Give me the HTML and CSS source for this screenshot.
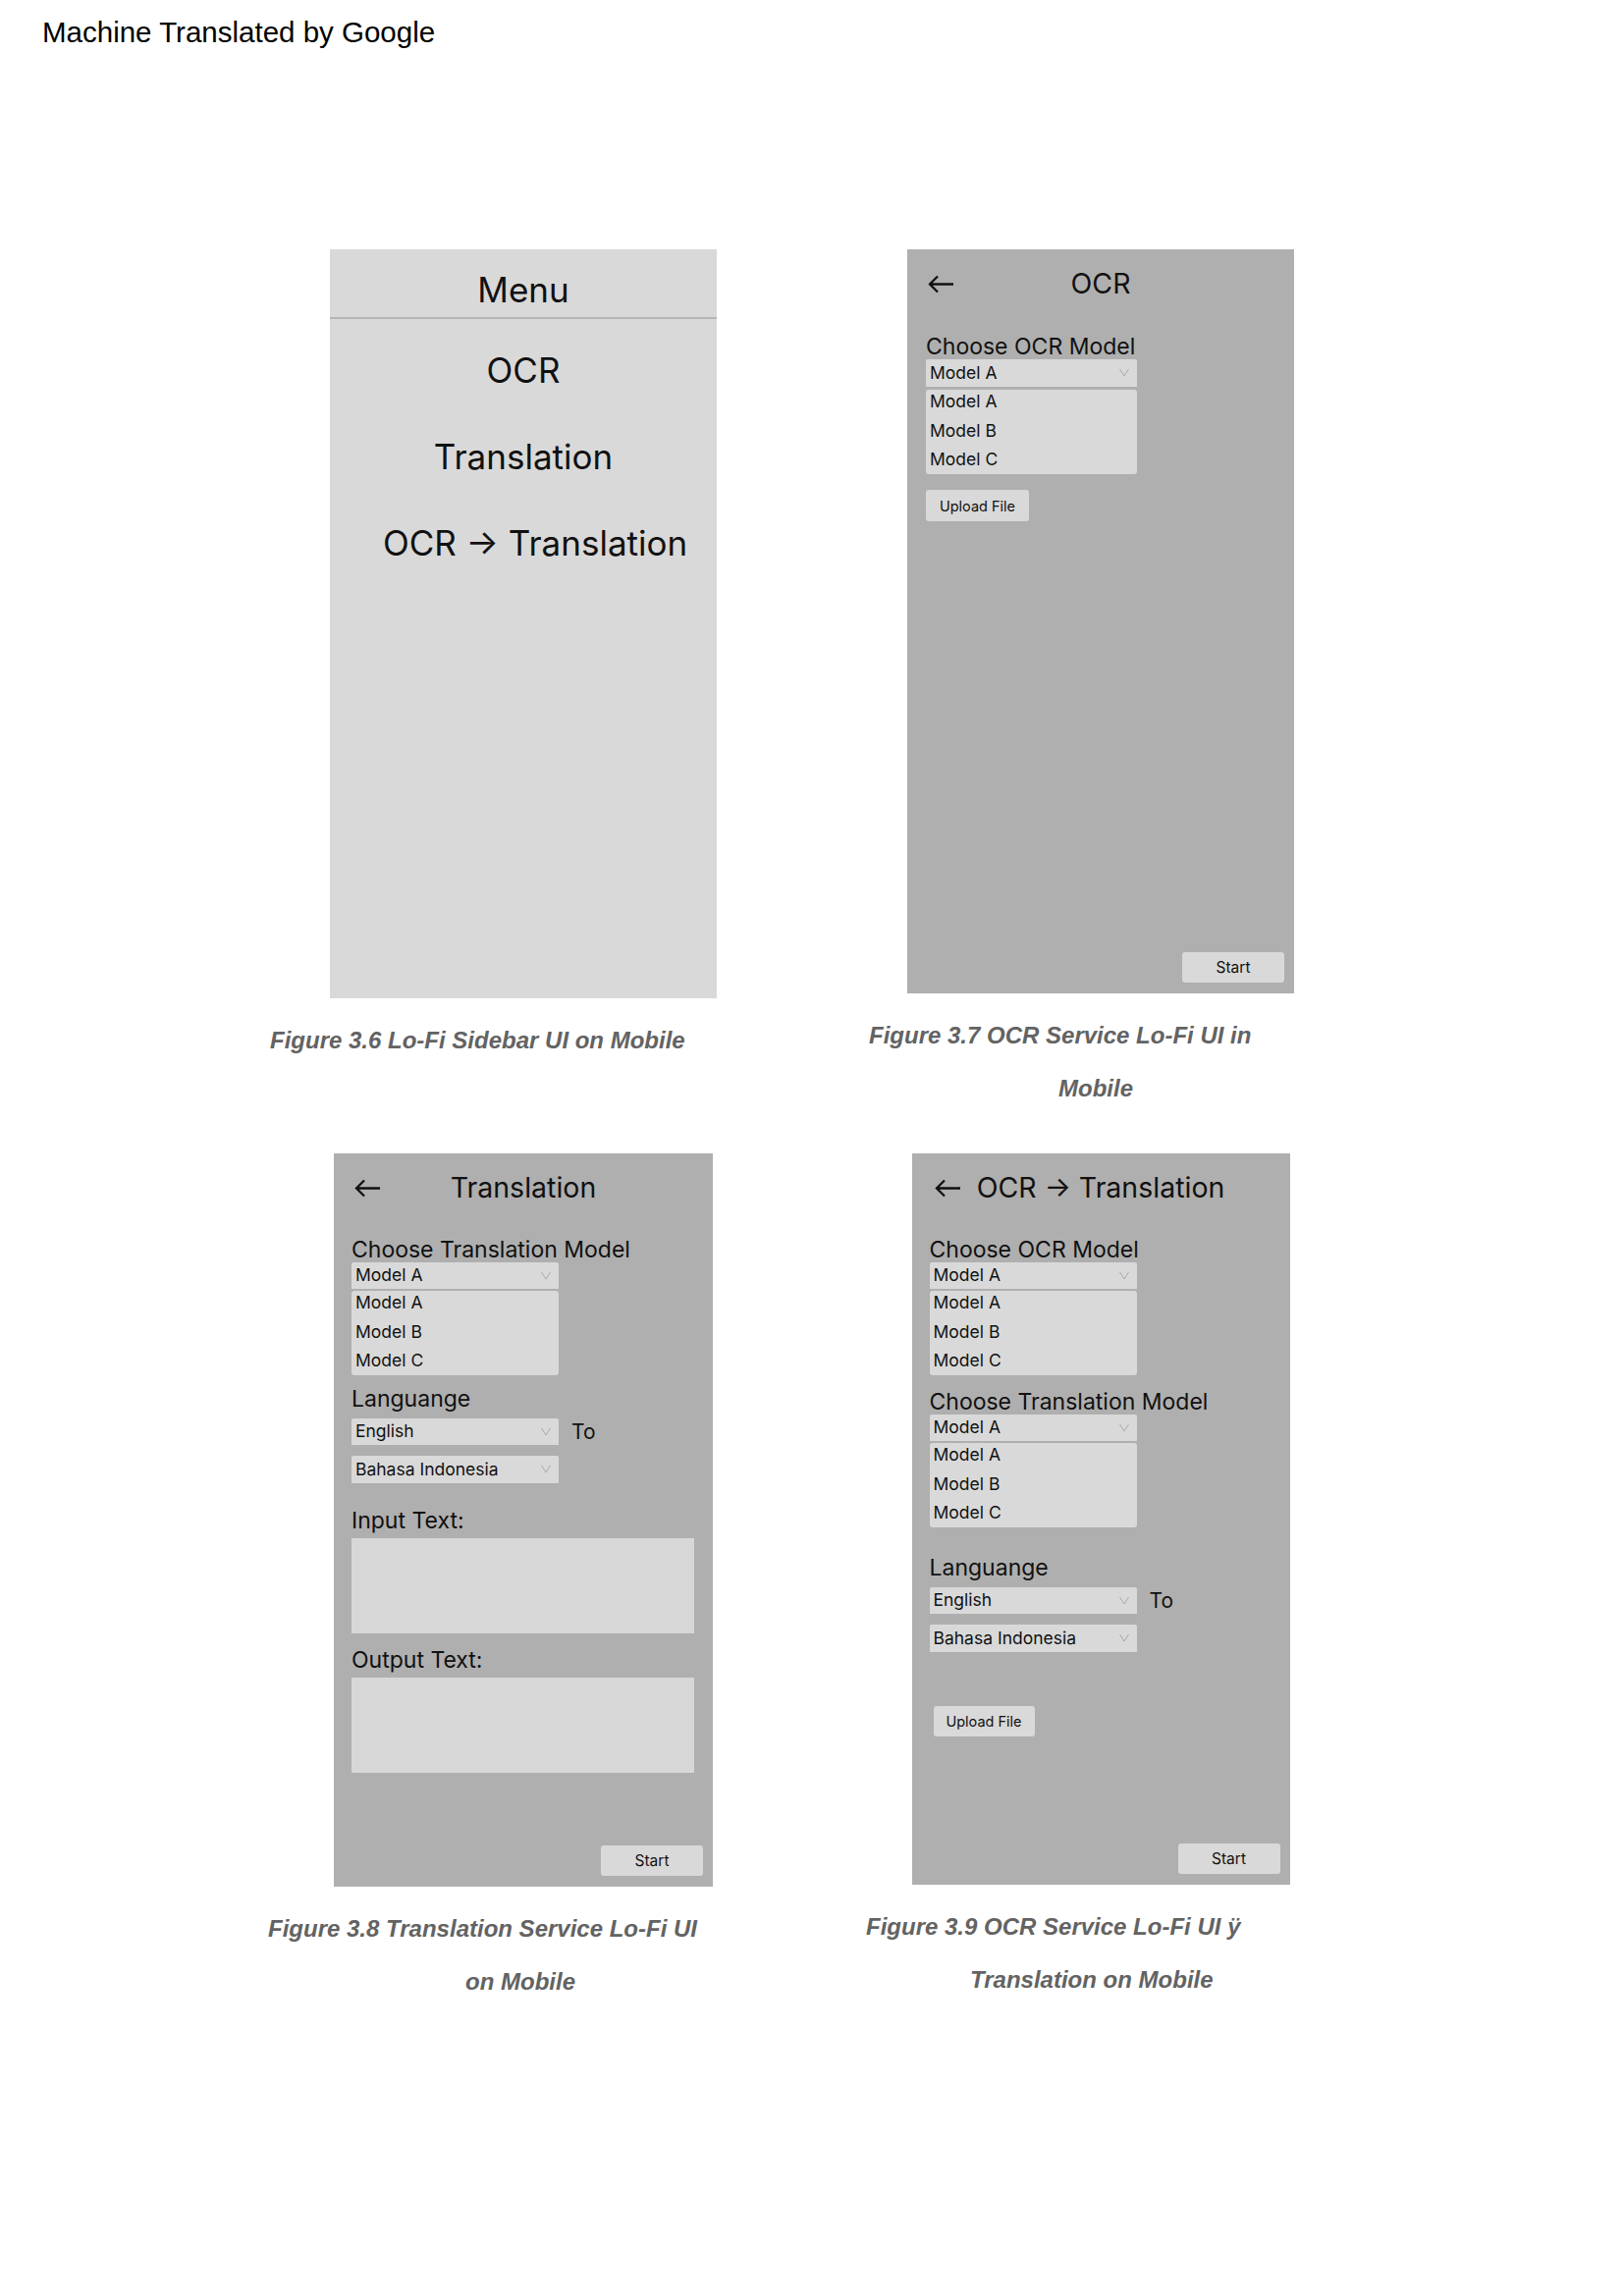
FILE: index.html
```html
<!DOCTYPE html>
<html lang="en">
<head>
    <meta charset="UTF-8">
    <meta name="viewport" content="width=device-width, initial-scale=1.0">
    <title>Lo-Fi Mobile UI</title>
    <link rel="stylesheet" href="styles.css">
</head>
<body>
    <div class="banner">Machine Translated by Google</div>

    <div class="figures">
        <!-- Figure 3.6 -->
        <div class="figure fig-menu">
            <div class="phone phone-menu">
                <div class="menu-head">Menu</div>
                <div class="menu-item menu-item-first">OCR</div>
                <div class="menu-item">Translation</div>
                <div class="menu-item menu-item-wide">OCR → Translation</div>
            </div>
            <div class="caption">
                <span class="cap-line">Figure 3.6 Lo-Fi Sidebar UI on Mobile</span>
            </div>
        </div>

        <!-- Figure 3.7 -->
        <div class="figure fig-ocr">
            <div class="phone phone-ocr">
                <div class="topbar">
                    <svg class="back" width="27" height="19" viewBox="0 0 27 19"><path d="M26 9.5H2.5M10 1.5L2 9.5l8 8" fill="none" stroke="#111" stroke-width="2.3"/></svg>
                    <span class="screen-title">OCR</span>
                </div>
                <div class="field-label first">Choose OCR Model</div>
                <div class="select"><span>Model A</span><svg class="chev" width="10" height="9" viewBox="0 0 10 9"><path d="M0.5 1L5 8l4.5-7" fill="none" stroke="#a9a9a9" stroke-width="1"/></svg></div>
                <div class="options">
                    <div class="option">Model A</div>
                    <div class="option">Model B</div>
                    <div class="option">Model C</div>
                </div>
                <button class="btn btn-upload">Upload File</button>
                <div class="footer"><button class="btn btn-start">Start</button></div>
            </div>
            <div class="caption">
                <span class="cap-line">Figure 3.7 OCR Service Lo-Fi UI in</span>
                <span class="cap-line cap-next">Mobile</span>
            </div>
        </div>

        <!-- Figure 3.8 -->
        <div class="figure fig-translate">
            <div class="phone phone-translate">
                <div class="topbar">
                    <svg class="back" width="27" height="19" viewBox="0 0 27 19"><path d="M26 9.5H2.5M10 1.5L2 9.5l8 8" fill="none" stroke="#111" stroke-width="2.3"/></svg>
                    <span class="screen-title">Translation</span>
                </div>
                <div class="field-label first">Choose Translation Model</div>
                <div class="select"><span>Model A</span><svg class="chev" width="10" height="9" viewBox="0 0 10 9"><path d="M0.5 1L5 8l4.5-7" fill="none" stroke="#a9a9a9" stroke-width="1"/></svg></div>
                <div class="options">
                    <div class="option">Model A</div>
                    <div class="option">Model B</div>
                    <div class="option">Model C</div>
                </div>
                <div class="field-label mt-sm">Languange</div>
                <div class="lang-row">
                    <div class="select"><span>English</span><svg class="chev" width="10" height="9" viewBox="0 0 10 9"><path d="M0.5 1L5 8l4.5-7" fill="none" stroke="#a9a9a9" stroke-width="1"/></svg></div>
                    <span class="to">To</span>
                </div>
                <div class="select select-target"><span>Bahasa Indonesia</span><svg class="chev" width="10" height="9" viewBox="0 0 10 9"><path d="M0.5 1L5 8l4.5-7" fill="none" stroke="#a9a9a9" stroke-width="1"/></svg></div>
                <div class="field-label mt-lg">Input Text:</div>
                <div class="textbox"></div>
                <div class="field-label mt-md">Output Text:</div>
                <div class="textbox"></div>
                <div class="footer"><button class="btn btn-start">Start</button></div>
            </div>
            <div class="caption">
                <span class="cap-line">Figure 3.8 Translation Service Lo-Fi UI</span>
                <span class="cap-line cap-next">on Mobile</span>
            </div>
        </div>

        <!-- Figure 3.9 -->
        <div class="figure fig-pipeline">
            <div class="phone phone-pipeline">
                <div class="topbar">
                    <svg class="back" width="27" height="19" viewBox="0 0 27 19"><path d="M26 9.5H2.5M10 1.5L2 9.5l8 8" fill="none" stroke="#111" stroke-width="2.3"/></svg>
                    <span class="screen-title">OCR → Translation</span>
                </div>
                <div class="field-label first">Choose OCR Model</div>
                <div class="select"><span>Model A</span><svg class="chev" width="10" height="9" viewBox="0 0 10 9"><path d="M0.5 1L5 8l4.5-7" fill="none" stroke="#a9a9a9" stroke-width="1"/></svg></div>
                <div class="options">
                    <div class="option">Model A</div>
                    <div class="option">Model B</div>
                    <div class="option">Model C</div>
                </div>
                <div class="field-label mt-md">Choose Translation Model</div>
                <div class="select"><span>Model A</span><svg class="chev" width="10" height="9" viewBox="0 0 10 9"><path d="M0.5 1L5 8l4.5-7" fill="none" stroke="#a9a9a9" stroke-width="1"/></svg></div>
                <div class="options">
                    <div class="option">Model A</div>
                    <div class="option">Model B</div>
                    <div class="option">Model C</div>
                </div>
                <div class="field-label mt-xl">Languange</div>
                <div class="lang-row">
                    <div class="select"><span>English</span><svg class="chev" width="10" height="9" viewBox="0 0 10 9"><path d="M0.5 1L5 8l4.5-7" fill="none" stroke="#a9a9a9" stroke-width="1"/></svg></div>
                    <span class="to">To</span>
                </div>
                <div class="select select-target"><span>Bahasa Indonesia</span><svg class="chev" width="10" height="9" viewBox="0 0 10 9"><path d="M0.5 1L5 8l4.5-7" fill="none" stroke="#a9a9a9" stroke-width="1"/></svg></div>
                <button class="btn btn-upload btn-upload-low">Upload File</button>
                <div class="footer"><button class="btn btn-start">Start</button></div>
            </div>
            <div class="caption">
                <span class="cap-line">Figure 3.9 OCR Service Lo-Fi UI ÿ</span>
                <span class="cap-line cap-next">Translation on Mobile</span>
            </div>
        </div>
    </div>
</body>
</html>
```

FILE: styles.css
```css
body {
    margin: 0;
    background-color: #fff;
    color: #000;
    font-family: "Liberation Sans", Arial, sans-serif;
}
.banner {
    padding: 16px 0 0 43px;
    font-size: 29.5px;
    line-height: 34px;
}
.figures {
    display: grid;
    grid-template-columns: 520px 520px;
    column-gap: 68px;
    row-gap: 39px;
    align-items: start;
    margin-top: 204px;
    padding-left: 273px;
}
.figure {
    display: flex;
    flex-direction: column;
    align-items: center;
}

/* phone frames */
.phone {
    box-sizing: border-box;
    display: flex;
    flex-direction: column;
    align-items: flex-start;
    padding: 0 19px 11px 18px;
    background-color: #afafaf;
    font-family: Inter, "Noto Sans", sans-serif;
    color: #111;
}
.phone-menu {
    width: 394px;
    height: 763px;
    padding: 0;
    align-items: stretch;
    background-color: #d9d9d9;
}
.phone-ocr {
    width: 394px;
    height: 758px;
    padding-left: 19px;
}
.phone-translate {
    width: 386px;
    height: 747px;
}
.phone-pipeline {
    width: 385px;
    height: 745px;
}

/* sidebar menu */
.menu-head {
    height: 48px;
    padding-top: 21px;
    border-bottom: 2px solid #b6b6b6;
    text-align: center;
    font-size: 35px;
    line-height: 40px;
}
.menu-item {
    margin-top: 48px;
    text-align: center;
    font-size: 35px;
    line-height: 40px;
}
.menu-item-first {
    margin-top: 32px;
}
.menu-item-wide {
    padding-left: 24px;
}

/* service screens */
.topbar {
    align-self: stretch;
    display: grid;
    grid-template-columns: 1fr auto 1fr;
    align-items: center;
    height: 36px;
    margin: 0 -19px 0 -18px;
    padding-top: 17px;
}
.phone-ocr .topbar {
    margin-left: -19px;
}
.back {
    display: block;
    margin-left: 21px;
}
.phone-pipeline .back {
    margin-left: 23px;
}
.screen-title {
    font-size: 28.5px;
    line-height: 36px;
    white-space: nowrap;
}
.field-label {
    font-size: 23px;
    line-height: 26px;
    white-space: nowrap;
}
.field-label.first {
    margin-top: 32px;
}
.phone-ocr .field-label.first {
    margin-top: 33px;
}
.mt-sm {
    margin-top: 11px;
}
.mt-md {
    margin-top: 14px;
}
.mt-lg {
    margin-top: 25px;
}
.mt-xl {
    margin-top: 28px;
}
.select {
    box-sizing: border-box;
    display: flex;
    justify-content: space-between;
    align-items: center;
    width: 211px;
    height: 27px;
    padding: 0 8px 1px 4px;
    background-color: #d9d9d9;
    border-radius: 2px 2px 0 0;
    font-size: 17.5px;
    line-height: 20px;
}
.phone-ocr .select {
    width: 215px;
    height: 28px;
}
.options {
    box-sizing: border-box;
    width: 211px;
    height: 86px;
    margin-top: 2px;
    padding-left: 4px;
    background-color: #d9d9d9;
    border-radius: 3px;
}
.phone-ocr .options {
    width: 215px;
    margin-top: 3px;
}
.option {
    height: 29.5px;
    font-size: 17.5px;
    line-height: 24px;
}
.lang-row {
    display: flex;
    align-items: center;
    gap: 13px;
    margin-top: 7px;
}
.to {
    font-size: 21px;
    line-height: 26px;
}
.select-target {
    margin-top: 11px;
    height: 28px;
}
.textbox {
    align-self: stretch;
    height: 97px;
    margin-top: 5px;
    background-color: #d7d7d7;
}
.btn {
    padding: 0;
    border: none;
    border-radius: 3px;
    background-color: #d9d9d9;
    color: #111;
    font-family: Inter, "Noto Sans", sans-serif;
    cursor: pointer;
}
.btn-upload {
    width: 105px;
    height: 32px;
    margin-top: 16px;
    font-size: 14.5px;
}
.btn-upload-low {
    margin: 55px 0 0 4px;
    width: 103px;
    height: 31px;
}
.footer {
    align-self: stretch;
    display: flex;
    justify-content: flex-end;
    margin: auto -9px 0 0;
}
.btn-start {
    width: 104px;
    height: 31px;
    font-size: 15.5px;
}

/* captions */
.caption {
    align-self: stretch;
    margin-top: 16px;
    color: #636363;
    font-size: 24px;
    font-weight: bold;
    font-style: italic;
    line-height: 54px;
}
.cap-line {
    display: block;
    white-space: nowrap;
}
.fig-menu .cap-line {
    padding-left: 2px;
}
.fig-ocr .cap-line {
    padding-left: 24px;
}
.fig-ocr .cap-next {
    padding-left: 217px;
}
.fig-translate .cap-next {
    padding-left: 201px;
}
.fig-pipeline .cap-line {
    padding-left: 21px;
}
.fig-pipeline .cap-next {
    padding-left: 127px;
}
```
